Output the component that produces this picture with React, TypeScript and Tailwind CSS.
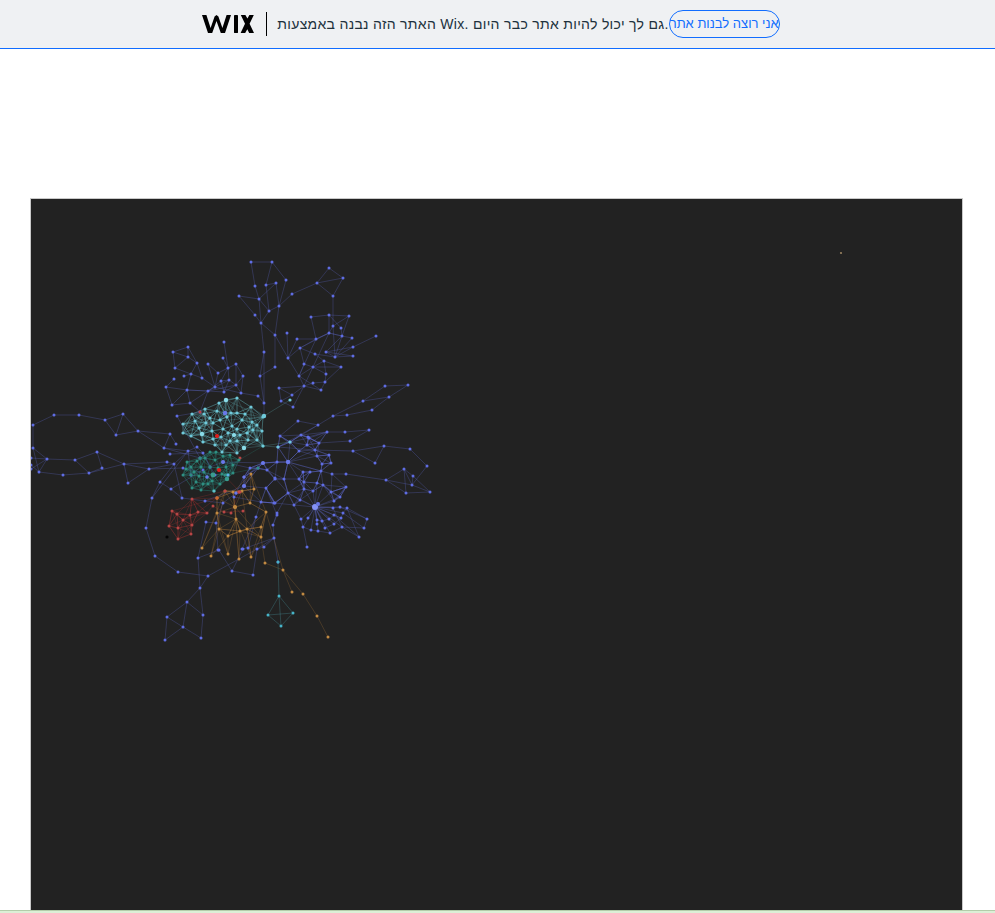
type Group = {
  node: string;
  edge: string;
  r: number;
  chains: string[];
  mesh?: string;
  k?: number;
};

const parse = (s: string) => s.split(" ").map((p) => p.split(",").map(Number) as [number, number]);

const groups: Group[] = [
  {
    node: "#5f6de4",
    edge: "rgba(92,104,200,0.3)",
    r: 1.5,
    mesh: "280,436 301,435 308,437 327,432 290,442 278,447 309,438 319,443 307,445 315,450 299,451 317,456 329,455 288,462 277,462 263,463 267,470 275,479 284,479 299,479 304,482 303,472 310,472 321,471 322,464 331,463 317,483 323,485 313,491 304,489 288,493 300,500 294,505 331,492 340,497 334,501 346,487 275,503 266,488 261,502 274,503 244,486 244,477 250,468 258,468",
    k: 4,
    chains: [
      // left loop
      "33,448 33,425 54,415 79,415 105,420 123,414 138,431 170,434 164,448 188,451 197,447",
      "105,420 116,435 138,431",
      "116,435 123,414",
      "138,431 164,448",
      "33,448 47,459 39,472 63,475 89,473 124,464 149,469 183,468",
      "47,459 75,460 89,473",
      "75,460 97,452 102,468 89,473",
      "97,452 124,464 128,483 149,469",
      "124,464 167,462 174,464 149,469",
      "31,458 47,459",
      "31,469 47,459",
      "31,465 39,472",
      "33,448 39,472",
      "174,464 188,451",
      "170,454 203,453",
      "170,434 176,444",
      "174,464 160,482 152,498 146,528 155,556 178,572 208,576 200,588 187,602 167,617 165,640 183,627 201,638 203,615 187,602 183,627 167,617",
      "200,588 203,615",
      "200,588 198,558 206,522",
      "208,576 257,549 274,538",
      "171,489 182,498 174,464",
      "160,482 171,489 203,470",
      "177,416 200,458",
      "188,451 191,475",
      "203,453 215,475",
      "183,468 213,475",
      "164,448 200,458",
      "152,498 188,451",
      "182,498 205,501 244,486",
      // upper left
      "173,352 188,347 188,357 175,368 173,352 188,357 197,363 191,374 184,376",
      "188,347 197,363",
      "175,368 191,374 202,378 197,363",
      "191,374 187,390 190,403 172,405 166,387 174,379",
      "166,387 187,390 208,391 215,387 202,378",
      "190,403 200,412 208,391",
      "187,390 172,405",
      "208,364 218,373 215,387 208,391",
      "208,364 215,387",
      "224,342 228,368 236,364 243,376 236,385 229,380 228,368",
      "223,358 228,368 221,381 224,392 236,385 241,393 258,396 264,403",
      "218,373 228,368",
      "208,391 221,381 229,380 224,392",
      "243,376 241,393",
      "236,364 236,385",
      "215,387 229,380",
      "200,412 177,416",
      "187,390 208,391 224,392",
      "190,403 208,391 236,385",
      "215,387 241,393",
      // top
      "251,262 272,262 286,280 279,306 276,283 259,299 239,296 255,315 261,323 275,335 288,358 287,333",
      "251,262 255,286 259,299 269,311 279,306 292,294 317,283 329,268 343,278 317,283 333,296 343,278",
      "272,262 266,285 276,283",
      "266,285 269,311 261,323 259,299",
      "261,323 264,352 260,376 275,367 275,335 279,306",
      "264,352 264,403 264,416",
      "260,376 264,403",
      "333,296 333,326",
      // right of top
      "311,317 329,315 349,316 342,336 329,333 316,339 311,317",
      "329,315 329,333 333,326 349,316",
      "329,315 341,328 342,336",
      "329,333 342,336 352,338 335,357 326,352 342,336",
      "342,336 335,357 333,326",
      "297,339 316,339 300,348 288,358 297,339",
      "316,339 329,333 300,348",
      "300,348 304,364 299,376 288,358",
      "300,348 315,354 335,357 353,356 326,352 353,347 376,336",
      "353,347 335,357",
      "324,361 341,367 313,367 324,361 315,354",
      "341,367 325,382 321,390 304,386 299,376 313,367 326,374 325,382 313,383 304,386",
      "304,364 313,367 304,386",
      "324,361 326,374",
      "299,376 321,390",
      "304,386 279,388 281,401 293,407 304,386 292,395 279,388",
      "292,395 281,401",
      "316,339 299,376",
      "329,333 313,367",
      // spokes to the right
      "278,447 318,425 333,416 347,415 372,410 389,397 408,385 385,386 363,401 389,397",
      "333,416 363,401",
      "318,425 298,421 280,436",
      "301,435 327,432 345,432 369,430 350,441 319,443",
      "290,442 301,435",
      "327,432 307,445",
      "280,436 290,442 278,447",
      "290,442 309,438 319,443 307,445 290,442",
      "318,425 290,442",
      "353,451 384,446 410,449 427,466 412,485 404,469 386,480 346,474 332,474 288,462",
      "384,446 375,463 353,451",
      "404,469 413,476 412,485 430,492 406,493 386,480 412,485",
      "413,476 430,492",
      "406,493 404,469",
      "353,451 315,450 278,447",
      "332,474 331,492 346,487 332,474",
      // star on the right
      "315,507 288,493",
      "315,507 294,505",
      "315,507 301,519",
      "315,507 303,527",
      "315,507 311,530",
      "315,507 318,531",
      "315,507 330,533",
      "315,507 342,527",
      "315,507 341,518",
      "315,507 343,513",
      "315,507 347,508",
      "315,507 340,507",
      "315,507 333,508",
      "315,507 334,501",
      "315,507 340,497",
      "315,507 331,492",
      "315,507 323,485",
      "315,507 317,483",
      "315,507 313,491",
      "315,507 304,489",
      "315,507 300,500",
      "315,507 317,520",
      "315,507 322,521",
      "315,507 329,519",
      "315,507 325,528",
      "315,507 334,515",
      "315,507 334,524",
      "315,507 308,518",
      "315,507 317,524",
      "303,527 307,547",
      "347,508 367,519 364,528 342,527 359,537 347,508",
      "343,513 364,528",
      "340,507 367,519",
      "334,515 359,537",
      "333,508 342,527 330,533 318,531 311,530 303,527",
      "317,520 322,521 329,519 334,515 341,518 343,513 347,508",
      "325,528 334,524 341,518",
      "340,497 346,487 331,492",
      "288,493 284,479 288,462 299,479 304,489 288,493 304,482 299,479 303,472 288,462",
      "304,482 317,483 321,471 310,472 303,472",
      "323,485 331,492",
      "322,464 321,471 288,462",
      "331,463 322,464 317,456 288,462 315,450 329,455 331,463",
      "299,451 288,462 290,442",
      "299,451 317,456 329,455",
      "263,463 288,462",
      "277,462 288,462",
      "267,470 284,479",
      "288,493 275,503 266,488 275,478 288,493",
      "275,479 263,463",
      "266,488 277,515 273,525 274,538 264,547 257,549 253,575 232,571 219,550 198,558",
      "243,549 232,571",
      "243,549 274,538",
      "288,493 277,513 273,525",
      "303,527 301,519 294,505",
      "274,538 278,562",
      "263,463 250,468 244,477 236,493 223,503 205,501",
      "258,468 244,486 234,497 261,502 274,503",
      "261,502 256,517 248,548",
      "256,517 242,549",
      "206,522 216,523 223,503",
      "216,523 218,550",
      "258,468 263,463 277,462",
      "197,447 203,453 188,451",
      "203,453 210,467 223,462 250,468",
      "223,462 263,463",
    ],
  },
  {
    node: "#c28a42",
    edge: "rgba(190,130,60,0.24)",
    r: 1.5,
    mesh: "225,491 233,492 242,491 254,489 251,474 217,498 235,507 250,503 217,513 236,519 266,512 261,527 247,529 240,531 219,529 228,536 261,537",
    k: 4,
    chains: [
      "202,548 219,529 211,556",
      "202,548 225,491",
      "211,556 228,536 228,554 219,529",
      "228,554 236,519",
      "239,559 240,531",
      "251,557 247,529",
      "239,559 235,507",
      "261,527 251,557 261,537 265,563",
      "251,557 236,519",
      "265,563 283,570 292,592",
      "283,570 303,594 317,616 328,637",
      "251,474 266,512 283,570",
      "235,507 261,537",
      "217,513 202,548",
      "217,513 228,554",
      "233,492 239,559",
      "225,491 211,556",
      "242,491 251,557",
    ],
  },
  {
    node: "#47b4c8",
    edge: "rgba(80,170,180,0.28)",
    r: 1.5,
    chains: ["279,596 268,615 293,613 279,596 281,626 268,615", "293,613 281,626", "278,562 279,596"],
  },
  {
    node: "#b84646",
    edge: "rgba(170,50,50,0.26)",
    r: 1.5,
    mesh: "192,499 172,511 177,514 190,515 198,512 207,513 183,520 169,526 178,528 192,525 191,534 178,539",
    k: 5,
    chains: [
      "192,499 217,498",
      "198,512 217,498",
      "207,513 213,506 224,512 231,513",
      "243,511 224,512",
      "239,492 231,513",
      "192,499 225,491",
      "172,511 217,498",
      "200,412 217,436 240,458",
      "219,470 240,492",
    ],
  },
  {
    node: "#2f8f82",
    edge: "rgba(40,140,125,0.24)",
    r: 1.5,
    mesh: "200,458 210,452 191,467 201,467 210,467 215,460 213,475 191,475 183,475 192,488 201,490 207,477 227,479 233,473 239,460 230,455 214,491 228,475 197,461 204,472 218,468 223,456 196,482 208,484 220,484 187,462 216,452 226,467 199,476 233,465 205,458 212,481 194,472 222,474 186,469 203,484",
    k: 8,
    chains: ["214,491 225,475", "239,460 263,446", "233,473 258,468"],
  },
  {
    node: "#70cadb",
    edge: "rgba(110,205,215,0.22)",
    r: 1.6,
    mesh: "192,414 205,409 226,400 237,398 251,407 263,417 183,424 195,421 183,433 191,436 202,434 213,423 217,411 225,413 231,413 237,413 245,414 242,420 252,422 257,425 262,431 257,440 263,446 244,448 237,453 230,441 221,437 213,439 203,442 215,445 223,429 232,426 234,435 240,435 247,433 253,430 219,403 210,418 206,423 227,417 212,431 248,440 237,441 222,452 199,428 220,420 237,429 226,445 204,414 249,427 228,433",
    k: 8,
    chains: ["263,417 226,400", "263,446 290,442", "264,416 263,417", "264,416 251,407", "263,446 278,447", "192,414 206,423", "183,424 263,417", "183,433 263,446", "264,416 290,400"],
  },
];

const big: [number, number, string, number][] = [
  [315, 507, "#8492f6", 3],
  [318, 504, "#6a78ea", 2],
  [288, 462, "#6a78ea", 2.2],
  [263, 463, "#6a78ea", 2],
  [223, 462, "#6a78ea", 2],
  [244, 486, "#6a78ea", 2.1],
  [207, 477, "#6a78ea", 1.7],
  [236, 493, "#6a78ea", 1.6],
  [244, 477, "#6a78ea", 1.6],
  [228, 475, "#5fb2e8", 1.6],
  [214, 491, "#5fc0c8", 1.6],
  [264, 416, "#70cadb", 2.2],
  [244, 448, "#8adbe8", 2.2],
  [202, 434, "#8adbe8", 2.2],
  [226, 400, "#8adbe8", 2.2],
  [234, 435, "#8adbe8", 2.1],
  [225, 413, "#6a78ea", 2.2],
  [213, 475, "#3a9d8f", 2.4],
  [227, 479, "#3a9d8f", 2.2],
  [235, 507, "#c28a42", 2.1],
  [217, 498, "#c86a30", 1.7],
  [217, 436, "#e01c1c", 2],
  [219, 470, "#e01c1c", 2],
  [239, 492, "#c24848", 1.5],
  [167, 537, "#050505", 1.6],
  [841, 253, "#9a8260", 1.1],
];

function meshEdges(points: [number, number][], k: number) {
  const out: [number, number][][] = [];
  points.forEach((p) => {
    const near = points
      .filter((q) => q !== p)
      .sort((a, b) => Math.hypot(a[0] - p[0], a[1] - p[1]) - Math.hypot(b[0] - p[0], b[1] - p[1]))
      .slice(0, k);
    near.forEach((q) => out.push([p, q]));
  });
  return out;
}

function NetworkGraph() {
  return (
    <svg viewBox="31 199 931 711" className="block w-full h-full blur-[0.45px]">
      {groups.map((g, i) => {
        const chains = g.chains.map(parse);
        const meshPts = g.mesh ? parse(g.mesh) : [];
        const edges = meshEdges(meshPts, g.k ?? 0);
        return (
          <g key={i} stroke={g.edge} fill="none">
            {chains.map((c, j) => (
              <polyline key={j} points={c.map((p) => p.join(",")).join(" ")} />
            ))}
            {edges.map(([a, b], j) => (
              <line key={j} x1={a[0]} y1={a[1]} x2={b[0]} y2={b[1]} />
            ))}
          </g>
        );
      })}
      {groups.map((g, i) => {
        const seen = new Set<string>();
        const pts = [...g.chains.flatMap(parse), ...(g.mesh ? parse(g.mesh) : [])].filter((p) => {
          const key = p.join(",");
          if (seen.has(key)) return false;
          seen.add(key);
          return true;
        });
        return (
          <g key={i} fill={g.node}>
            {pts.map((p, j) => (
              <circle key={j} cx={p[0]} cy={p[1]} r={g.r} />
            ))}
          </g>
        );
      })}
      {big.map(([x, y, c, r], i) => (
        <circle key={i} cx={x} cy={y} r={r} fill={c} />
      ))}
    </svg>
  );
}

function WixLogo() {
  return (
    <svg viewBox="0 0 52 18" className="w-[52px] h-[18px] shrink-0" fill="#000">
      <polygon points="0,0 4.4,0 8.6,13 12.6,1.6 14.5,0 16.4,1.6 20.4,13 24.6,0 29,0 23,18 18.8,18 14.5,6 10.2,18 6,18" />
      <rect x="32" y="0" width="4" height="18" rx="0.4" />
      <polygon points="38.8,0 43.4,0 45.4,3.6 47.4,0 51.8,0 47.6,8.8 52,18 47.2,18 45.3,14.2 43.2,18 38.6,18 43,8.8" />
    </svg>
  );
}

export default function App() {
  return (
    <div className="min-h-[913px] bg-white font-['Liberation_Sans',Arial,sans-serif]">
      <header className="h-[49px] bg-[#eff1f3] border-b border-[#116dff] flex items-center justify-center pr-[13px]">
        <WixLogo />
        <div className="w-px h-6 bg-black ml-3 mr-[10px]" />
        <p className="text-sm tracking-[0.3px] text-[#20303c] whitespace-nowrap" dir="ltr">
          האתר הזה נבנה באמצעות Wix. גם לך יכול להיות אתר כבר היום.
        </p>
        <a className="h-7 flex items-center rounded-full border border-[#116dff] text-[13px] text-[#116dff] whitespace-nowrap" dir="rtl">
          אני רוצה לבנות אתר
        </a>
      </header>
      <main className="pt-[149px] pl-[30px]">
        <div className="w-[933px] h-[712px] bg-[#222222] border-l border-t border-r border-[#c9c9c9]">
          <NetworkGraph />
        </div>
      </main>
      <div className="h-[3px] bg-[#dcefd6] border-t border-[#b4ccaa]" />
    </div>
  );
}
